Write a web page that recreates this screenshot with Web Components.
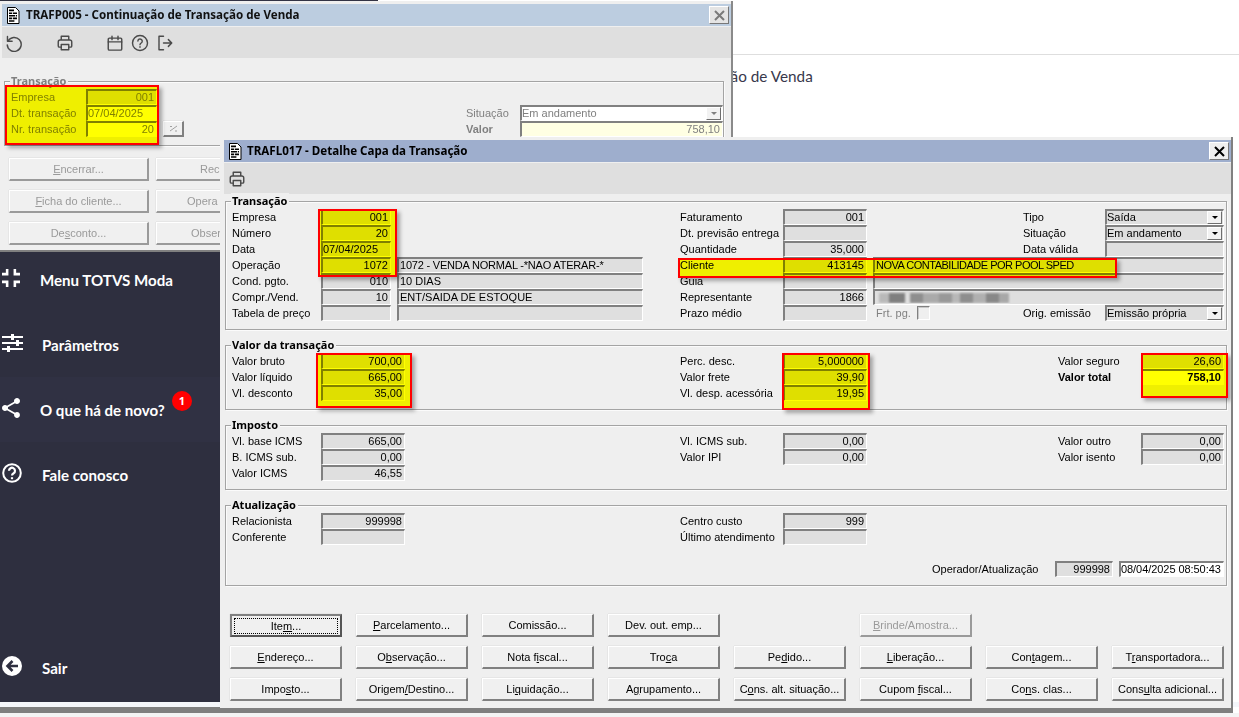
<!DOCTYPE html>
<html lang="pt-BR"><head><meta charset="utf-8"><title>TOTVS Moda</title>
<style>
html,body{margin:0;padding:0;background:#fff}
body{font:11px "Liberation Sans",Arial,sans-serif;color:#000}
</style></head><body>
<page-shell>
  <side-bar slot="side">
    <side-item label="Menu TOTVS Moda" icon="menu" style="--tx:40px"></side-item>
    <side-item label="Parâmetros" icon="sliders" style="--tx:42px"></side-item>
    <side-item label="O que há de novo?" icon="share" badge="1" active style="--tx:40px"></side-item>
    <side-item label="Fale conosco" icon="help" style="--tx:42px"></side-item>
    <side-item label="Sair" icon="exit" bottom style="--tx:42px"></side-item>
  </side-bar>
  <span slot="title">Continuação de Venda</span>

  <erp-window slot="win" caption="TRAFP005 - Continuação de Transação de Venda" faded style="left:0;top:1px;width:733px;height:251px;z-index:1">
    <tb-icon slot="tools" name="undo" style="margin-left:3px"></tb-icon>
    <tb-icon slot="tools" name="print" style="margin-left:33px"></tb-icon>
    <tb-icon slot="tools" name="calendar" style="margin-left:32px"></tb-icon>
    <tb-icon slot="tools" name="help" style="margin-left:7px"></tb-icon>
    <tb-icon slot="tools" name="exit" style="margin-left:7px"></tb-icon>
    <erp-group caption="Transação" style="margin:23px 7px 0 2px;--cols:75px 71px 6px 21px 282px 54px 203px;--pt:7px;--pb:8px">
      <erp-label at="1 1">Empresa</erp-label><erp-field at="1 2">001</erp-field>
      <erp-label at="2 1">Dt. transação</erp-label><erp-field at="2 2" left white>07/04/2025</erp-field>
      <erp-label at="3 1">Nr. transação</erp-label><erp-field at="3 2" white>20</erp-field>
      <erp-btn at="3 4" small><svg width="11" height="9" viewBox="0 0 11 9" fill="none" stroke="#a0a0a0"><path d="M2 7 9 2M2 2.5h2M7 7h2"/></svg></erp-btn>
      <erp-label at="2 6">Situação</erp-label><erp-field at="2 7" left white select>Em andamento</erp-field>
      <erp-label at="3 6" bold>Valor</erp-label><erp-field at="3 7" cream>758,10</erp-field>
    </erp-group>
    <erp-actions style="--cols:repeat(2,140px);--gap:9px 7px;margin:12px 0 0 7px">
      <erp-btn disabled><u>E</u>ncerrar...</erp-btn><erp-btn disabled style="--start:43px">Rec</erp-btn>
      <erp-btn disabled><u>F</u>icha do cliente...</erp-btn><erp-btn disabled style="--start:30px">Opera</erp-btn>
      <erp-btn disabled>De<u>s</u>conto...</erp-btn><erp-btn disabled style="--start:34px">Obser</erp-btn>
    </erp-actions>
    <erp-mark x="5" y="84" w="154" h="60"></erp-mark>
  </erp-window>

  <erp-window slot="win" caption="TRAFL017 - Detalhe Capa da Transação" style="left:220px;top:137px;width:1013px;height:571px;z-index:2">
    <tb-icon slot="tools" name="print" style="margin-left:4px"></tb-icon>
    <erp-group caption="Transação" style="margin:7px 4px 0 1px;--cols:89px 70px 6px 246px 37px 103px 84px 6px 150px 82px 119px">
      <erp-label at="1 1">Empresa</erp-label><erp-field at="1 2">001</erp-field>
      <erp-label at="1 6">Faturamento</erp-label><erp-field at="1 7">001</erp-field>
      <erp-label at="1 10">Tipo</erp-label><erp-field at="1 11" left select>Saída</erp-field>

      <erp-label at="2 1">Número</erp-label><erp-field at="2 2">20</erp-field>
      <erp-label at="2 6">Dt. previsão entrega</erp-label><erp-field at="2 7"></erp-field>
      <erp-label at="2 10">Situação</erp-label><erp-field at="2 11" left select>Em andamento</erp-field>

      <erp-label at="3 1">Data</erp-label><erp-field at="3 2" left>07/04/2025</erp-field>
      <erp-label at="3 6">Quantidade</erp-label><erp-field at="3 7">35,000</erp-field>
      <erp-label at="3 10">Data válida</erp-label><erp-field at="3 11"></erp-field>

      <erp-label at="4 1">Operação</erp-label><erp-field at="4 2">1072</erp-field>
      <erp-field at="4 4" left style="letter-spacing:-.2px;padding-left:1px">1072 - VENDA NORMAL -*NAO ATERAR-*</erp-field>
      <erp-label at="4 6">Cliente</erp-label><erp-field at="4 7">413145</erp-field>
      <erp-field at="4 9 3" left style="letter-spacing:-.5px;padding-left:1px">NOVA CONTABILIDADE POR POOL SPED</erp-field>

      <erp-label at="5 1">Cond. pgto.</erp-label><erp-field at="5 2">010</erp-field>
      <erp-field at="5 4" left style="padding-left:1px">10 DIAS</erp-field>
      <erp-label at="5 6">Guia</erp-label><erp-field at="5 7"></erp-field>
      <erp-field at="5 9 3" left></erp-field>

      <erp-label at="6 1">Compr./Vend.</erp-label><erp-field at="6 2">10</erp-field>
      <erp-field at="6 4" left style="padding-left:1px">ENT/SAIDA DE ESTOQUE</erp-field>
      <erp-label at="6 6">Representante</erp-label><erp-field at="6 7">1866</erp-field>
      <erp-field at="6 9 3" left><blur-text></blur-text></erp-field>

      <erp-label at="7 1">Tabela de preço</erp-label><erp-field at="7 2"></erp-field>
      <erp-field at="7 4" left></erp-field>
      <erp-label at="7 6">Prazo médio</erp-label><erp-field at="7 7"></erp-field>
      <erp-check at="7 9">Frt. pg.</erp-check>
      <erp-label at="7 10">Orig. emissão</erp-label><erp-field at="7 11" left select>Emissão própria</erp-field>
    </erp-group>

    <erp-group caption="Valor da transação" style="--cols:89px 84px 275px 103px 84px 191px 83px 83px">
      <erp-label at="1 1">Valor bruto</erp-label><erp-field at="1 2">700,00</erp-field>
      <erp-label at="1 4">Perc. desc.</erp-label><erp-field at="1 5">5,000000</erp-field>
      <erp-label at="1 7">Valor seguro</erp-label><erp-field at="1 8">26,60</erp-field>
      <erp-label at="2 1">Valor líquido</erp-label><erp-field at="2 2">665,00</erp-field>
      <erp-label at="2 4">Valor frete</erp-label><erp-field at="2 5">39,90</erp-field>
      <erp-label at="2 7" bold>Valor total</erp-label><erp-field at="2 8" white bold>758,10</erp-field>
      <erp-label at="3 1">Vl. desconto</erp-label><erp-field at="3 2">35,00</erp-field>
      <erp-label at="3 4">Vl. desp. acessória</erp-label><erp-field at="3 5">19,95</erp-field>
    </erp-group>

    <erp-group caption="Imposto" style="--cols:89px 84px 275px 103px 84px 191px 83px 83px">
      <erp-label at="1 1">Vl. base ICMS</erp-label><erp-field at="1 2">665,00</erp-field>
      <erp-label at="1 4">Vl. ICMS sub.</erp-label><erp-field at="1 5">0,00</erp-field>
      <erp-label at="1 7">Valor outro</erp-label><erp-field at="1 8">0,00</erp-field>
      <erp-label at="2 1">B. ICMS sub.</erp-label><erp-field at="2 2">0,00</erp-field>
      <erp-label at="2 4">Valor IPI</erp-label><erp-field at="2 5">0,00</erp-field>
      <erp-label at="2 7">Valor isento</erp-label><erp-field at="2 8">0,00</erp-field>
      <erp-label at="3 1">Valor ICMS</erp-label><erp-field at="3 2">46,55</erp-field>
    </erp-group>

    <erp-group caption="Atualização" style="--cols:89px 84px 275px 103px 84px 65px 123px 58px 6px 105px;--rows:16px 16px 16px 16px">
      <erp-label at="1 1">Relacionista</erp-label><erp-field at="1 2">999998</erp-field>
      <erp-label at="1 4">Centro custo</erp-label><erp-field at="1 5">999</erp-field>
      <erp-label at="2 1">Conferente</erp-label><erp-field at="2 2"></erp-field>
      <erp-label at="2 4">Último atendimento</erp-label><erp-field at="2 5"></erp-field>
      <erp-label at="4 7">Operador/Atualização</erp-label>
      <erp-field at="4 8">999998</erp-field><erp-field at="4 10" left white style="letter-spacing:-.06px;padding:0">08/04/2025 08:50:43</erp-field>
    </erp-group>

    <erp-actions style="--cols:repeat(8,112px);--gap:9px 14px;margin:28px 0 0 6px">
      <erp-btn default>Ite<u>m</u>...</erp-btn><erp-btn><u>P</u>arcelamento...</erp-btn><erp-btn>Comissão...</erp-btn><erp-btn>Dev. out. emp...</erp-btn><span></span><erp-btn disabled><u>B</u>rinde/Amostra...</erp-btn><span></span><span></span>
      <erp-btn><u>E</u>ndereço...</erp-btn><erp-btn>O<u>b</u>servação...</erp-btn><erp-btn>Nota f<u>i</u>scal...</erp-btn><erp-btn>Tro<u>c</u>a</erp-btn><erp-btn>Pe<u>d</u>ido...</erp-btn><erp-btn><u>L</u>iberação...</erp-btn><erp-btn>Con<u>t</u>agem...</erp-btn><erp-btn>T<u>r</u>ansportadora...</erp-btn>
      <erp-btn>Impo<u>s</u>to...</erp-btn><erp-btn>Origem<u>/</u>Destino...</erp-btn><erp-btn>Li<u>q</u>uidação...</erp-btn><erp-btn>A<u>g</u>rupamento...</erp-btn><erp-btn>C<u>o</u>ns. alt. situação...</erp-btn><erp-btn>Cupom <u>f</u>iscal...</erp-btn><erp-btn>Co<u>n</u>s. clas...</erp-btn><erp-btn>Cons<u>u</u>lta adicional...</erp-btn>
    </erp-actions>

    <erp-mark x="98" y="72" w="79" h="68"></erp-mark>
    <erp-mark x="96" y="216" w="96" h="55"></erp-mark>
    <erp-mark x="458" y="121" w="439" h="20"></erp-mark>
    <erp-mark x="562" y="216" w="88" h="57"></erp-mark>
    <erp-mark x="921" y="216" w="87" h="45"></erp-mark>
  </erp-window>
</page-shell>

<script>
function define(name, css, html, after){
  customElements.define(name, class extends HTMLElement{
    connectedCallback(){
      if(this.shadowRoot) return;
      const at=this.getAttribute('at');
      if(at){const [r,c,s]=at.split(' ');this.style.gridRow=r;this.style.gridColumn=c+(s?' / span '+s:'');}
      const root=this.attachShadow({mode:'open'});
      root.innerHTML='<style>'+css+'</style>'+(typeof html==='function'?html(this):html);
      if(after) after(this,root);
    }
  });
}
const ICONS={
 undo:'<path d="M4.2 9.3A9.3 9.3 0 1 1 3 14.5"/><path d="M3.3 3.4v6.2h6.2"/>',
 print:'<path d="M7 8V3h10v5M7 17.5H4.5A1.5 1.5 0 0 1 3 16v-5.5A2.5 2.5 0 0 1 5.5 8h13a2.5 2.5 0 0 1 2.5 2.5V16a1.5 1.5 0 0 1-1.5 1.5H17"/><path d="M7 14h10v7H7z"/>',
 calendar:'<path d="M4.5 5.5h15A1.5 1.5 0 0 1 21 7v13a1.5 1.5 0 0 1-1.5 1.5h-15A1.5 1.5 0 0 1 3 20V7a1.5 1.5 0 0 1 1.5-1.5z"/><path d="M3 10.5h18M8 3v4.5M16 3v4.5"/>',
 help:'<circle cx="12" cy="12" r="10"/><path d="M9.2 9.4a2.9 2.9 0 1 1 4.4 2.6c-1 .6-1.6 1.2-1.6 2.4M12 16.8v1"/>',
 exit:'<path d="M10 3H4v18h6M10 12h11M16.5 7.5 21 12l-4.5 4.5"/>'
};
const SIDE={
 menu:'<svg width="18" height="18" viewBox="5 5 14 14" fill="#fff"><path d="M5 16h3v3h2v-5H5v2zm3-8H5v2h5V5H8v3zm6 11h2v-3h3v-2h-5v5zm2-11V5h-2v5h5V8h-3z"/></svg>',
 sliders:'<svg width="21" height="18" viewBox="0 0 21 18" fill="#fff"><path d="M0 2h21v2H0zM0 8h21v2H0zM0 14h21v2H0z"/><path d="M9 0h3v6H9zM14 6h3v6h-3zM5 12h3v6H5z"/></svg>',
 share:'<svg width="18" height="20" viewBox="3 2 18 20" fill="#fff"><path d="M18 16.08c-.76 0-1.44.3-1.96.77L8.91 12.7c.05-.23.09-.46.09-.7s-.04-.47-.09-.7l7.05-4.11c.54.5 1.25.81 2.04.81 1.66 0 3-1.34 3-3s-1.34-3-3-3-3 1.34-3 3c0 .24.04.47.09.7L8.04 9.81C7.5 9.31 6.79 9 6 9c-1.66 0-3 1.34-3 3s1.34 3 3 3c.79 0 1.5-.31 2.04-.81l7.12 4.16c-.05.21-.08.43-.08.65 0 1.61 1.31 2.92 2.92 2.92s2.92-1.31 2.92-2.92-1.31-2.92-2.92-2.92z"/></svg>',
 help:'<svg width="20" height="20" viewBox="0 0 20 20" fill="none" stroke="#fff"><circle cx="10" cy="10" r="8.8" stroke-width="2"/><path d="M7 7.8A3 3 0 1 1 11.6 10.3c-1 .6-1.6 1-1.6 2.2" stroke-width="2.2"/><path d="M10 14.2v2" stroke-width="2.2"/></svg>',
 exit:'<svg width="20" height="20" viewBox="0 0 20 20"><circle cx="10" cy="10" r="10" fill="#fff"/><path d="M16 10H6M10.5 5 5.5 10l5 5" fill="none" stroke="#2e2f40" stroke-width="2.6"/></svg>'
};

define('page-shell',`
 :host{display:grid;grid-template-columns:220px 1fr;grid-template-rows:702px 5px 6px 4px;width:1239px;height:717px;overflow:hidden;position:relative;background:#fff}
 .main{grid-column:2;grid-row:1;min-width:0}
 .head{height:54px;border-bottom:1px solid #dedede}
 .ttl{padding:12px 0 0 442px;font:15.3px/18px Lato,"Noto Sans",sans-serif;color:#38384c;white-space:nowrap}
 .gap{grid-column:1/-1;grid-row:2;background:#f4f6fa}
 .bar{grid-column:1/-1;grid-row:3;background:#7f7f7f;margin-right:6px}
 .end{grid-column:1/-1;grid-row:4;background:#f4f4f4}
 .strip{position:absolute;left:220px;top:0;width:158px;height:1px;background:#333344}
 `,`<slot name="side"></slot><div class="main"><div class="head"></div><div class="ttl"><slot name="title"></slot></div></div>
 <div class="gap"></div><div class="bar"></div><div class="end"></div><div class="strip"></div><slot name="win"></slot>`);

define('side-bar',`:host{display:flex;flex-direction:column;grid-column:1;grid-row:1;background:#2e2f3f;padding:247px 0 2px;box-sizing:border-box;height:702px}`,'<slot></slot>');

define('side-item',`
 :host{display:flex;align-items:center;height:65px;position:relative;padding-left:2px;color:#fff;font:700 15.1px/20px Lato,"Noto Sans",sans-serif;flex:none}
 :host([active]){background:#303143}
 :host([bottom]){margin-top:auto}
 .ic{width:calc(var(--tx) - 2px);flex:none;display:flex;margin-top:-3px}
 .t{white-space:nowrap;margin-top:1px}
 .b{position:absolute;left:172px;top:14px;width:20px;height:20px;border-radius:50%;background:#f00;color:#fff;font:700 11px/20px "Noto Sans",sans-serif;text-align:center}
 `,el=>`<span class="ic">${SIDE[el.getAttribute('icon')]}</span><span class="t">${el.getAttribute('label')}</span>${el.hasAttribute('badge')?`<span class="b">${el.getAttribute('badge')}</span>`:''}`);

define('erp-window',`
 :host{position:absolute;display:flex;flex-direction:column;box-sizing:border-box;background:#efefef;padding:3px 0 0 4px;border-right:2px solid #808080;overflow:hidden;
   --title:#9eaecd;--x:#000;--xbg:#efefef;--docgap:5px}
 :host([faded]){padding-left:2px;color:#808080;--title:#bccde0;--x:#7a7a7a;--xbg:#e4e4e4;--docgap:6px;border-bottom:2px solid #808080;border-right-color:#8a8a8a}
 .tb{height:22px;flex:none;background:var(--title);display:flex;align-items:center;padding:0 2px 0 4px}
 .doc{flex:none;margin-right:var(--docgap)}
 .cap{flex:1;font:700 11.6px/22px "Noto Sans",sans-serif;color:#000;white-space:nowrap;overflow:hidden}
 :host([faded]) .cap{color:#111}
 .x{flex:none;width:20px;height:18px;box-sizing:border-box;background:var(--xbg);border:1px solid;border-color:#fff #777 #777 #fff;display:flex;align-items:center;justify-content:center}
 .tools{height:30px;padding-top:1px;flex:none;margin-top:1px;background:#dfdfdf;display:flex;align-items:center}
 .body{flex:1;min-height:0}
 `,el=>`<div class="tb">
   <svg class="doc" width="14" height="17" viewBox="0 0 14 17"><path d="M1.5.5h8l3.5 3.5v12.5H1.5z" fill="#fff" stroke="#000"/><path d="M3 2.6h5v1.6H3zM3 5.4h3V7H3zM6.8 5.4H11V7H6.8zM3 8h6.2v1.6H3zM10 8h1v1.6h-1zM3 10.6h3v1.6H3zM6.8 10.6H11v1.6H6.8zM3 13.2h5.4v1.6H3z" fill="#000"/></svg>
   <span class="cap">${el.getAttribute('caption')}</span>
   <span class="x"><svg width="11" height="11" viewBox="0 0 11 11"><path d="M1 1l9 9M10 1l-9 9" stroke="var(--x)" stroke-width="2" fill="none"/></svg></span></div>
   <div class="tools"><slot name="tools"></slot></div><div class="body"><slot></slot></div>`);

define('tb-icon',`:host{display:flex;flex:none;width:18px;height:18px;color:#4a4a4a}`,
 el=>`<svg width="18" height="18" viewBox="0 0 24 24" fill="none" stroke="currentColor" stroke-width="1.9" stroke-linecap="round" stroke-linejoin="round">${ICONS[el.getAttribute('name')]}</svg>`);

define('erp-group',`
 :host{display:block;position:relative;box-sizing:border-box;border:1px solid #a4a4a4;box-shadow:inset 1px 1px 0 #fbfbfb,1px 1px 0 #fbfbfb;margin:15px 4px 0 1px;padding:var(--pt,7px) 0 var(--pb,8px) 6px}
 .lg{position:absolute;left:5px;top:-9px;padding:0 2px 0 1px;background:#efefef;font:700 11px/15px "Noto Sans",sans-serif;white-space:nowrap}
 .g{display:grid;grid-template-columns:var(--cols);grid-auto-rows:16px;grid-template-rows:var(--rows,none)}
 `,el=>`<span class="lg">${el.getAttribute('caption')}</span><div class="g"><slot></slot></div>`);

define('erp-label',`:host{display:block;font:11px/16px "Liberation Sans",Arial,sans-serif;white-space:nowrap}:host([bold]){font-weight:700}`,'<slot></slot>');

define('erp-field',`
 :host{display:flex;align-items:center;justify-content:flex-end;box-sizing:border-box;height:16px;min-width:0;background:#dfdfdf;border:solid;border-width:2px 1px 1px 2px;border-color:#808080 #fff #fff #808080;font:11px/13px "Liberation Sans",Arial,sans-serif;padding:0 2px 0 0;white-space:nowrap;overflow:hidden;position:relative}
 :host([left]){justify-content:flex-start;padding-left:0}
 :host([white]){background:#fff}
 :host([cream]){background:#ffffe3}
 :host([bold]){font-weight:700}
 .t{flex:1;min-width:0;overflow:hidden}
 :host(:not([left])) .t{text-align:right}
 .arrow{flex:none;width:15px;height:13px;box-sizing:border-box;margin:-1px -1px 0 0;background:#f2f2f2;border:1px solid;border-color:#fff #6e6e6e #6e6e6e #fff;display:flex;align-items:center;justify-content:center}
 .arrow i{display:block;width:0;height:0;border:3px solid transparent;border-top-color:currentColor;border-bottom:0}
 `,el=>`<span class="t"><slot></slot></span>${el.hasAttribute('select')?'<span class="arrow"><i></i></span>':''}`);

define('erp-check',`
 :host{display:flex;align-items:center;padding-left:3px;color:#808080;font:11px/16px "Liberation Sans",Arial,sans-serif}
 b{display:block;box-sizing:border-box;width:13px;height:14px;margin-left:6px;border:solid;border-width:1px;border-color:#808080 #fff #fff #808080;box-shadow:inset 1px 1px 0 #c8c8c8;background:#efefef}
 `,'<slot></slot><b></b>');

define('blur-text',`:host{display:block;width:130px;height:10px;margin:1px 0 0 4px;filter:blur(1.2px);
  background:linear-gradient(90deg,#b9b9b9 0 8%,#7f7f7f 8% 20%,#dfdfdf 20% 24%,#8e8e8e 24% 34%,#aaa 34% 46%,#989898 46% 56%,#b8b8b8 56% 62%,#8e8e8e 62% 72%,#b0b0b0 72% 82%,#888 82% 92%,#a8a8a8 92%)}`,'');

define('erp-actions',`:host{display:grid;grid-template-columns:var(--cols);grid-auto-rows:23px;gap:var(--gap)}`,'<slot></slot>');

define('erp-btn',`
 :host{display:flex;align-items:center;box-sizing:border-box;background:#f0f0f0;border:solid;border-width:1px 2px 2px 1px;border-color:#fff #808080 #808080 #fff;box-shadow:0 -1px 0 #e6e6e6,-1px 0 0 #e6e6e6;font:11px/14px "Liberation Sans",Arial,sans-serif;color:#000;white-space:nowrap;overflow:hidden;position:relative}
 :host([disabled]){color:#9a9a9a;border-color:#fff #9a9a9a #9a9a9a #fff}
 :host([small]){height:16px}
 :host([default]){border:2px solid #666;border-color:#808080 #555 #555 #808080;background:#f0f0f0}
 .l{flex:1;text-align:center}
 :host([style*="--start"]) .l{text-align:left;padding-left:var(--start)}
 .f{display:none}
 :host([default]) .f{display:block;position:absolute;inset:2px 2px 1px 2px;border:1px dotted #000}
 `,'<span class="f"></span><span class="l"><slot></slot></span>');

define('erp-mark',`
 :host{position:absolute;box-sizing:border-box;border:2px solid #f00;box-shadow:3px 3px 4px rgba(0,0,0,.32)}
 .y{position:absolute;inset:0;background:#ff0;mix-blend-mode:multiply}
 `,'<div class="y"></div>',(el)=>{
   el.style.left=el.getAttribute('x')+'px';el.style.top=el.getAttribute('y')+'px';
   el.style.width=el.getAttribute('w')+'px';el.style.height=el.getAttribute('h')+'px';
 });
</script>
</body></html>
